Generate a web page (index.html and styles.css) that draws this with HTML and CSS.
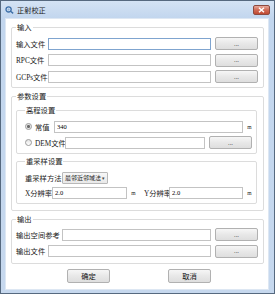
FILE: index.html
```html
<html>
<head>
    <meta charset="UTF-8">
    <title>正射校正</title>
    <link rel="stylesheet" href="styles.css">
</head>
<body>

<div class="window">
    <div class="titlebar">
        <svg class="app-icon" width="9" height="9" viewBox="0 0 9 9">
            <circle cx="3.6" cy="4.4" r="2.6" fill="none" stroke="#3d6fa8" stroke-width="1.3"/>
            <path d="M5.2 6 L8.2 8.4" stroke="#3d6fa8" stroke-width="1.4"/>
            <circle cx="3.6" cy="4.4" r="1" fill="#8fb3d9"/>
        </svg>
        <span class="title">正射校正</span>
        <span class="close-btn">
            <svg width="7" height="6" viewBox="0 0 7 6">
                <path d="M1 0.8 L6 5.2 M6 0.8 L1 5.2" stroke="#fff" stroke-width="1.5"/>
            </svg>
        </span>
    </div>

    <div class="content">
        <fieldset class="group">
            <legend>输入</legend>
            <div class="row">
                <span class="lbl">输入文件</span>
                <input class="text focus" type="text">
                <button class="btn">...</button>
            </div>
            <div class="row">
                <span class="lbl">RPC文件</span>
                <input class="text" type="text">
                <button class="btn">...</button>
            </div>
            <div class="row">
                <span class="lbl">GCPs文件</span>
                <input class="text" type="text">
                <button class="btn">...</button>
            </div>
        </fieldset>

        <fieldset class="group params">
            <legend>参数设置</legend>

            <fieldset class="group inner">
                <legend>高程设置</legend>
                <div class="row">
                    <span class="radio checked"></span>
                    <span class="lbl-const">常值</span>
                    <input class="text small" type="text" value="340">
                    <span class="unit">m</span>
                </div>
                <div class="row">
                    <span class="radio"></span>
                    <span class="lbl-dem">DEM文件</span>
                    <input class="text" type="text">
                    <button class="btn">...</button>
                </div>
            </fieldset>

            <fieldset class="group inner resample">
                <legend>重采样设置</legend>
                <div class="row">
                    <span class="lbl-method">重采样方法</span>
                    <span class="combo">最邻近邻域法<span class="arrow">▾</span></span>
                </div>
                <div class="row">
                    <span class="lbl-res">X分辨率</span>
                    <input class="text small res" type="text" value="2.0">
                    <span class="unit">m</span>
                    <span class="lbl-res y">Y分辨率</span>
                    <input class="text small" type="text" value="2.0">
                    <span class="unit">m</span>
                </div>
            </fieldset>
        </fieldset>

        <fieldset class="group output">
            <legend>输出</legend>
            <div class="row">
                <span class="lbl wide">输出空间参考</span>
                <input class="text" type="text">
                <button class="btn">...</button>
            </div>
            <div class="row">
                <span class="lbl">输出文件</span>
                <input class="text" type="text">
                <button class="btn">...</button>
            </div>
        </fieldset>

        <div class="actions">
            <button class="btn action">确定</button>
            <button class="btn action">取消</button>
        </div>
    </div>
</div>

</body>
</html>
```

FILE: styles.css
```css
* {
    margin: 0;
    padding: 0;
    box-sizing: border-box;
}
body {
    width: 275px;
    height: 294px;
    font-family: "Liberation Serif", "Noto Sans CJK SC", serif;
    font-size: 7.3px;
    color: #1a1a1a;
    background: #fff;
}
.window {
    width: 275px;
    height: 294px;
    border: 1px solid #56697f;
    background: linear-gradient(#d4e3f4, #c2d6ee 17px, #c6d8ee);
    padding: 0 5px 3px 4px;
    display: flex;
    flex-direction: column;
}
.titlebar {
    height: 17px;
    display: flex;
    align-items: center;
}
.app-icon {
    margin-right: 3px;
}
.title {
    font-family: "Noto Sans CJK SC", sans-serif;
    font-size: 7.2px;
    color: #1c1c1c;
}
.close-btn {
    margin-left: auto;
    margin-right: -1px;
    width: 17px;
    height: 10px;
    border: 1px solid #8c4a40;
    border-radius: 2px;
    background: linear-gradient(#e7a99c, #d06a55 50%, #c04a32);
    display: flex;
    align-items: center;
    justify-content: center;
}
.content {
    flex: 1;
    background: #fff;
    border: 1px solid #dde7f3;
    padding: 3px 4px 0 5px;
}
.group {
    min-width: 0;
    border: 1px solid #dcdcdc;
    border-radius: 2px;
    padding: 5px 5px 4px 4px;
}
.group legend {
    padding: 0 1px;
    line-height: 10px;
    font-family: "Noto Sans CJK SC", sans-serif;
}
.params {
    margin-top: 3px;
    padding: 4px 6px 6px 4px;
}
.inner {
    padding: 5px 4px 4px 8px;
}
.resample {
    margin-top: 2px;
}
.output {
    margin-top: 3px;
    padding: 4px 5px 5px 4px;
}
.row {
    display: flex;
    align-items: center;
    height: 13px;
}
.row + .row {
    margin-top: 3.5px;
}
.inner .row + .row {
    margin-top: 3px;
}
.resample .row + .row {
    margin-top: 2px;
}
.lbl {
    width: 32px;
    white-space: nowrap;
}
.lbl.wide {
    width: 46px;
}
.text {
    flex: 1;
    min-width: 0;
    width: 10px;
    height: 12px;
    border: 1px solid #c3c3c3;
    background: #fff;
    font-family: "Liberation Serif", serif;
    font-size: 6.5px;
    padding: 0 2px;
    outline: none;
}
.text.focus {
    border-color: #7fa4cf;
}
.btn {
    width: 43px;
    height: 13px;
    margin-left: 4px;
    border: 1px solid #b1b1b1;
    border-radius: 2px;
    background: linear-gradient(#f6f6f6, #e8e8e8 50%, #dedede);
    font-family: "Noto Sans CJK SC", sans-serif;
    font-size: 6px;
    line-height: 10px;
    color: #333;
}
.radio {
    width: 7px;
    height: 7px;
    border-radius: 50%;
    border: 1px solid #9a9a9a;
    background: linear-gradient(#e4e4e4, #fff);
    margin-right: 3px;
}
.radio.checked {
    background: radial-gradient(circle, #6a6a6a 0 1.3px, #d8d8d8 1.6px, #fff 3px);
}
.lbl-const {
    width: 16px;
    margin-right: 3px;
}
.lbl-dem {
    width: 27px;
    margin-right: 3px;
    white-space: nowrap;
}
.unit {
    width: 5px;
    margin-left: 4px;
    font-size: 5.5px;
    text-align: center;
}
.lbl-method {
    width: 37px;
    white-space: nowrap;
}
.combo {
    width: 46px;
    height: 12px;
    border: 1px solid #b8b8b8;
    border-radius: 1px;
    background: linear-gradient(#f7f7f7, #e9e9e9);
    font-family: "Noto Sans CJK SC", sans-serif;
    font-size: 6px;
    line-height: 10px;
    padding-left: 2px;
    display: flex;
    white-space: nowrap;
}
.arrow {
    margin-left: auto;
    margin-right: 2px;
    font-size: 5px;
    color: #444;
}
.lbl-res {
    width: 27px;
    white-space: nowrap;
}
.lbl-res.y {
    margin-left: 8px;
    width: 25px;
}
.text.res {
    flex: none;
    width: 75px;
}
.actions {
    display: flex;
    gap: 58px;
    margin-top: 5px;
    padding-left: 56px;
}
.action {
    margin-left: 0;
    height: 14px;
    font-size: 7.3px;
    color: #111;
}
```
